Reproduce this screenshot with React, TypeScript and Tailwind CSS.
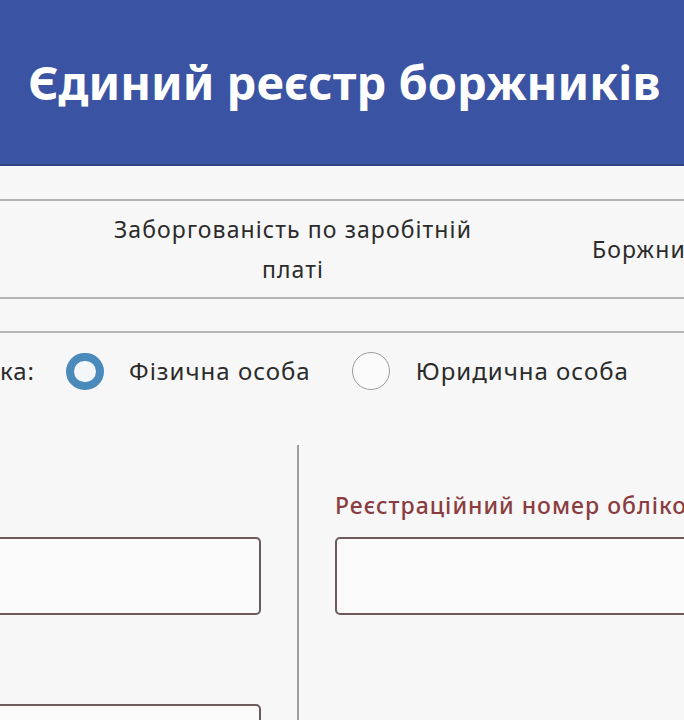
export default function App() {
  return (
    <div className="w-[684px] h-[720px] overflow-hidden bg-[#f7f7f7] text-[#2b2b2b] font-['Noto_Sans',sans-serif]">
      <header className="h-[166px] bg-[#3b53a3] border-b-2 border-[#2e4282] flex items-center pl-[28px]">
        <h1 className="text-white font-bold text-[47px] leading-none whitespace-nowrap">
          Єдиний реєстр боржників
        </h1>
      </header>

      <div className="h-[33px]" />
      <nav className="border-t-2 border-b-2 border-[#b4b4b4] h-[100px] flex items-center whitespace-nowrap text-[23px] tracking-[1.1px] leading-[40px]">
        <div className="ml-[100px] w-[386px] shrink-0 text-center whitespace-normal">
          Заборгованість по заробітній платі
        </div>
        <div className="ml-[106px] shrink-0">Боржники</div>
      </nav>
      <div className="h-[34px] border-b-2 border-[#b4b4b4]" />

      <div className="h-[76px] flex items-center text-[24px] tracking-[1px] whitespace-nowrap">
        <span>ка:</span>
        <span className="ml-[31px] w-[38px] h-[37px] rounded-full border-[8px] border-[#4a8bbb] bg-[#f4f7fa] shrink-0" />
        <span className="ml-[25px]">Фізична особа</span>
        <span className="ml-[41px] w-[38px] h-[38px] rounded-full border border-[#9c9c9c] bg-[#fafafa] shrink-0" />
        <span className="ml-[26px]">Юридична особа</span>
      </div>

      <div className="mt-[36px] flex">
        <div className="w-[299px] shrink-0 border-r-2 border-[#9e9e9e] h-[300px] pt-[92px]">
          <div className="-ml-[20px] w-[281px] h-[78px] rounded-[5px] border-2 border-[#6d5a5c] bg-[#fafafa]" />
          <div className="mt-[89px] -ml-[20px] w-[281px] h-[78px] rounded-[5px] border-2 border-[#6d5a5c] bg-[#fafafa]" />
        </div>
        <div className="pl-[36px] pt-[46px]">
          <label className="block text-[23px] leading-[28px] tracking-[1px] text-[#8a3d40] font-medium whitespace-nowrap">
            Реєстраційний номер облікової картки
          </label>
          <div className="mt-[18px] w-[400px] h-[78px] rounded-[5px] border-2 border-[#6d5a5c] bg-[#fafafa]" />
        </div>
      </div>
    </div>
  )
}
